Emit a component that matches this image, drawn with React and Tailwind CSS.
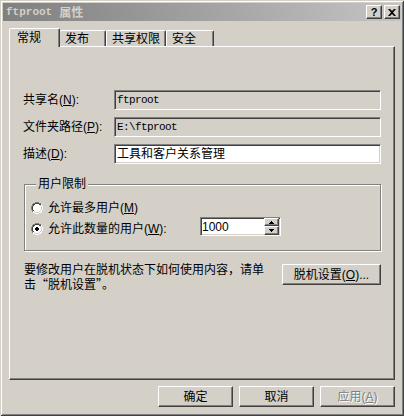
import React from 'react';

const raised =
    'border border-t-white border-l-white border-b-[#404040] border-r-[#404040] shadow-[inset_-1px_-1px_0_#808080]';
const sunken =
    'border border-t-[#808080] border-l-[#808080] border-b-white border-r-white shadow-[inset_1px_1px_0_#404040,inset_-1px_-1px_0_#d4d0c8]';

const Radio = ({ checked }) => (
    <svg width="12" height="12" viewBox="0 0 12 12" className="shrink-0">
        <path d="M4 0h4v1h2v1h1v2h1v4h-1v2h-1v1h-2v1h-4v-1h-2v-1h-1v-2h-1v-4h1v-2h1v-1h2z" fill="#fff" />
        <path d="M4 0h4v1h-4zM2 1h2v1h-2zM8 1h2v1h-2zM1 2h1v2h-1zM0 4h1v4h-1zM1 8h1v2h-1z" fill="#808080" />
        <path d="M4 1h4v1h-4zM2 2h2v1h-2zM8 2h2v1h-2zM2 3h1v1h-1zM1 4h1v4h-1zM2 8h1v1h-1z" fill="#404040" />
        <path d="M10 2h1v2h-1zM11 4h1v4h-1zM10 8h1v2h-1zM8 10h2v1h-2zM4 11h4v1h-4zM2 10h2v1h-2z" fill="#fff" />
        <path d="M9 3h1v1h-1zM10 4h1v4h-1zM9 8h1v1h-1zM8 9h1v1h-1zM4 10h4v1h-4zM3 9h1v1h-1z" fill="#d4d0c8" />
        {checked && <path d="M5 4h2v1h1v2h-1v1h-2v-1h-1v-2h1z" fill="#000" />}
    </svg>
);

const Row = ({ label, value, white, mono }) => (
    <div className="flex items-center h-[20px]">
        <div className="w-[91px] leading-[14px]">{label}</div>
        <div
            className={`${sunken} w-[267px] h-[20px] flex items-center pl-[2px] ${white ? 'bg-white' : 'bg-[#d4d0c8]'} ${mono ? "font-['Liberation_Mono',monospace] text-[11px] tracking-[-0.6px]" : ''}`}
        >
            {value}
        </div>
    </div>
);

const Button = ({ children, disabled, className = '' }) => (
    <button
        className={`${raised} bg-[#d4d0c8] h-[21px] flex items-center justify-center leading-[14px] ${disabled ? 'text-[#808080] [text-shadow:1px_1px_0_#fff]' : 'text-black'} ${className}`}
    >
        {children}
    </button>
);

const App = () => {
    return (
        <div className="w-[404px] h-[416px] bg-[#d4d0c8] p-[3px] flex flex-col text-[12px] text-black font-['Liberation_Sans','Noto_Sans_CJK_SC',sans-serif] shadow-[inset_1px_1px_0_#d4d0c8,inset_-1px_-1px_0_#404040,inset_2px_2px_0_#fff,inset_-2px_-2px_0_#808080]">
            {/* title bar */}
            <div className="h-[18px] flex items-center bg-linear-to-r from-[#808080] to-[#c4c4c4] pl-[3px] pr-[1px]">
                <span className="font-bold text-[#d4d0c8] flex items-center">
                    <span className="font-['Liberation_Mono',monospace] text-[11px]">ftproot</span>
                    <span className="ml-[7px] font-['Noto_Sans_CJK_SC',sans-serif]">属性</span>
                </span>
                <div className="ml-auto flex gap-[2px]">
                    <div className={`${raised} bg-[#d4d0c8] w-[16px] h-[14px] flex items-center justify-center font-bold text-[11px] leading-none`}>?</div>
                    <div className={`${raised} bg-[#d4d0c8] w-[16px] h-[14px] flex items-center justify-center`}>
                        <svg width="8" height="7" viewBox="0 0 8 7">
                            <path d="M0 0h2l2 2 2-2h2l-3 3.5 3 3.5h-2l-2-2-2 2h-2l3-3.5z" fill="#000" />
                        </svg>
                    </div>
                </div>
            </div>

            {/* tabs */}
            <div className="mt-[7px] h-[18px] flex items-start pl-[6px]">
                <div className="relative z-10 w-[51px] h-[19px] bg-[#d4d0c8] border-t border-l border-t-white border-l-white border-r border-r-[#404040] rounded-t-[2px] shadow-[inset_-1px_0_0_#808080] pl-[7px] pt-[2px] leading-[14px]">
                    常规
                </div>
                <div className="mt-[2px] w-[46px] h-[16px] border-t border-t-white border-r border-r-[#404040] rounded-t-[2px] shadow-[inset_-1px_0_0_#808080] pl-[5px] pt-[1px] leading-[14px]">
                    发布
                </div>
                <div className="mt-[2px] w-[60px] h-[16px] border-t border-l border-t-white border-l-white border-r border-r-[#404040] rounded-t-[2px] shadow-[inset_-1px_0_0_#808080] pl-[5px] pt-[1px] leading-[14px]">
                    共享权限
                </div>
                <div className="mt-[2px] w-[48px] h-[16px] border-t border-l border-t-white border-l-white border-r border-r-[#404040] rounded-t-[2px] shadow-[inset_-1px_0_0_#808080] pl-[5px] pt-[1px] leading-[14px]">
                    安全
                </div>
            </div>

            {/* panel */}
            <div className={`${raised} ml-[6px] w-[386px] h-[334px] flex flex-col pl-[13px] pt-[43px]`}>
                <div className="flex flex-col gap-[7px]">
                    <Row label={<>共享名(<u>N</u>):</>} value="ftproot" mono />
                    <Row label={<>文件夹路径(<u>P</u>):</>} value="E:\ftproot" mono />
                    <Row label={<>描述(<u>D</u>):</>} value="工具和客户关系管理" white />
                </div>

                <div className="ml-[1px] mt-[20px] w-[357px] border border-[#808080] shadow-[inset_1px_1px_0_#fff,1px_1px_0_#fff] flex flex-col pl-[6px] pb-[13px]">
                    <div className="-mt-[8px] ml-[5px] self-start bg-[#d4d0c8] px-[2px] leading-[14px]">用户限制</div>
                    <div className="mt-[9px] flex items-center gap-[5px] h-[16px]">
                        <Radio />
                        <span className="leading-[14px]">允许最多用户(<u>M</u>)</span>
                    </div>
                    <div className="mt-[1px] flex items-start">
                        <div className="mt-[4px] w-[169px] flex items-center gap-[5px] h-[16px]">
                            <Radio checked />
                            <span className="leading-[14px]">允许此数量的用户(<u>W</u>):</span>
                        </div>
                        <div className={`${sunken} bg-white w-[81px] h-[19px] flex items-center pl-[1px] pr-[1px]`}>
                            <span className="text-[12px]">1000</span>
                            <div className="ml-auto flex flex-col">
                                <div className={`${raised} bg-[#d4d0c8] w-[15px] h-[8px] flex items-center justify-center`}>
                                    <svg width="5" height="3" viewBox="0 0 5 3"><path d="M2 0h1v1h1v1h1v1h-5v-1h1v-1h1z" fill="#000" /></svg>
                                </div>
                                <div className={`${raised} bg-[#d4d0c8] w-[15px] h-[9px] flex items-center justify-center`}>
                                    <svg width="5" height="3" viewBox="0 0 5 3"><path d="M0 0h5v1h-1v1h-1v1h-1v-1h-1v-1h-1z" fill="#000" /></svg>
                                </div>
                            </div>
                        </div>
                    </div>
                </div>

                <div className="mt-[10px] flex items-start">
                    <p className="ml-[1px] w-[258px] leading-[15px] font-['Noto_Sans_CJK_SC',sans-serif]">
                        要修改用户在脱机状态下如何使用内容，请单
                        <br />
                        击“脱机设置”。
                    </p>
                    <Button className="mt-[3px] w-[99px]">
                        脱机设置(<u>O</u>)...
                    </Button>
                </div>
            </div>

            {/* dialog buttons */}
            <div className="mt-[6px] flex justify-end gap-[6px] pr-[6px]">
                <Button className="w-[75px]">确定</Button>
                <Button className="w-[75px]">取消</Button>
                <Button className="w-[75px]" disabled>
                    应用(<u>A</u>)
                </Button>
            </div>
        </div>
    );
};

export default App;
